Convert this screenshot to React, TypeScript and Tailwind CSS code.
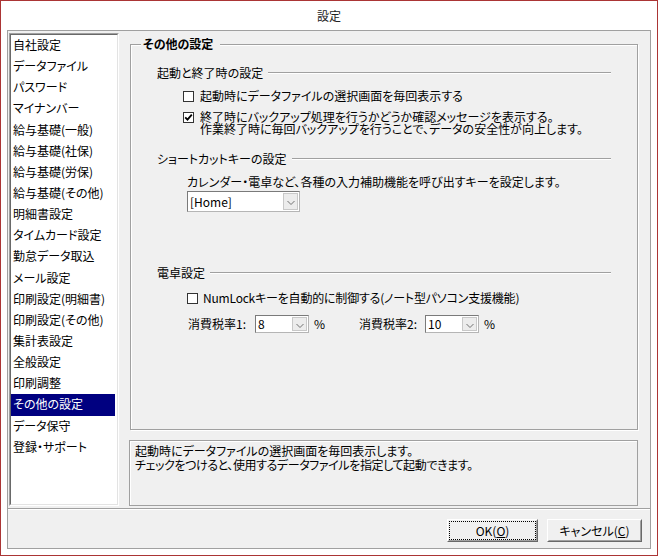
import React from "react";

const items = [
  "自社設定",
  "データファイル",
  "パスワード",
  "マイナンバー",
  "給与基礎(一般)",
  "給与基礎(社保)",
  "給与基礎(労保)",
  "給与基礎(その他)",
  "明細書設定",
  "タイムカード設定",
  "勤怠データ取込",
  "メール設定",
  "印刷設定(明細書)",
  "印刷設定(その他)",
  "集計表設定",
  "全般設定",
  "印刷調整",
  "その他の設定",
  "データ保守",
  "登録・サポート",
];

function CheckBox({ checked }: { checked?: boolean }) {
  return (
    <span className="w-[11px] h-[11px] shrink-0 border border-[#333333] bg-white flex items-center justify-center">
      {checked && (
        <svg width="9" height="9" viewBox="0 0 9 9">
          <path d="M1.2 4.3 L3.5 6.7 L7.8 1.6" stroke="#000" strokeWidth="1.8" fill="none" />
        </svg>
      )}
    </span>
  );
}

function Arrow() {
  return (
    <span className="w-[15px] h-full border border-[#c8c8c8] bg-[#ececec] flex items-center justify-center">
      <svg width="8" height="6" viewBox="0 0 8 6" className="mt-[3px]">
        <path d="M0.5 1 L4 4.5 L7.5 1" stroke="#707070" strokeWidth="1" fill="none" />
      </svg>
    </span>
  );
}

function Heading({ text, className }: { text: string; className: string }) {
  return (
    <div className={className}>
      <span>{text}</span>
      <div className="ml-[5px] flex-1 h-[2px] border-t border-t-[#a0a0a0] border-b border-b-white" />
    </div>
  );
}

export default function App() {
  return (
    <div className="w-[658px] h-[556px] border border-[#ab3535] bg-white flex flex-col font-['Noto_Sans_CJK_JP',sans-serif] [font-feature-settings:'palt'] text-[12px] leading-[14px] text-black select-none">
      <div className="h-[29px] shrink-0 flex items-center justify-center text-[#222222]">設定</div>
      <div className="mx-[6px] mb-[6px] flex-1 border border-[#a0a0a0] bg-[#f0f0f0] flex flex-col">
        <div className="h-[478px] shrink-0 flex border-b border-b-[#a0a0a0]">
          {/* list box */}
          <div className="ml-[1px] mt-[2px] mb-[2px] w-[110px] border border-t-[#a0a0a0] border-l-[#a0a0a0] border-r-white border-b-white">
            <div className="h-full border border-t-[#696969] border-l-[#696969] border-r-[#e3e3e3] border-b-[#e3e3e3] bg-white">
              {items.map((it, i) => (
                <div
                  key={it}
                  className={
                    i === 17
                      ? "h-[21.15px] mr-[2px] pl-[2px] pb-[1px] flex items-center bg-[#000080] text-white"
                      : "h-[21.15px] mr-[2px] pl-[2px] pb-[1px] flex items-center"
                  }
                >
                  {it}
                </div>
              ))}
            </div>
          </div>

          {/* right area */}
          <div className="flex-1 flex flex-col pt-[13px]">
            <div className="relative ml-[11px] mr-[12px] h-[386px] border border-[#a0a0a0] shadow-[inset_1px_1px_0_#ffffff,1px_1px_0_#ffffff]">
              <span className="absolute left-[10px] -top-[8px] bg-[#f0f0f0] pl-[2px] pr-[7px] font-bold">その他の設定</span>
              <div className="flex flex-col">
                <Heading text="起動と終了時の設定" className="mt-[18px] h-[20px] flex items-center pl-[26px] pr-[26px]" />
                <div className="mt-[3px] h-[20px] flex items-center pl-[52px] gap-[6px]">
                  <CheckBox />
                  <span>起動時にデータファイルの選択画面を毎回表示する</span>
                </div>
                <div className="mt-[5px] flex items-start pl-[52px] gap-[6px]">
                  <span className="mt-[1px]">
                    <CheckBox checked />
                  </span>
                  <div className="leading-[12px]">
                    <div>終了時にバックアップ処理を行うかどうか確認メッセージを表示する。</div>
                    <div>作業終了時に毎回バックアップを行うことで、データの安全性が向上します。</div>
                  </div>
                </div>
                <Heading text="ショートカットキーの設定" className="mt-[14px] h-[20px] flex items-center pl-[26px] pr-[26px]" />
                <div className="mt-[5px] h-[16px] flex items-center pl-[56px]">
                  カレンダー・電卓など、各種の入力補助機能を呼び出すキーを設定します。
                </div>
                <div className="mt-[1px] ml-[56px] w-[113px] h-[21px] flex border border-t-[#7a7a7a] border-l-[#7a7a7a] border-r-[#b5b5b5] border-b-[#b5b5b5] bg-white p-[1px]">
                  <span className="flex-1 pl-[1px] flex items-center">[Home]</span>
                  <Arrow />
                </div>
                <Heading text="電卓設定" className="mt-[51px] h-[20px] flex items-center pl-[26px] pr-[26px]" />
                <div className="mt-[5px] h-[20px] flex items-center pl-[56px] gap-[5px]">
                  <CheckBox />
                  <span className="tracking-[-0.2px]">NumLockキーを自動的に制御する(ノート型パソコン支援機能)</span>
                </div>
                <div className="mt-[6px] h-[20px] flex items-center pl-[57px]">
                  <div className="w-[171px] flex items-center">
                    <span className="w-[67px]">消費税率1:</span>
                    <div className="w-[54px] h-[18px] flex border border-t-[#7a7a7a] border-l-[#7a7a7a] border-r-[#b5b5b5] border-b-[#b5b5b5] bg-white p-[1px]">
                      <span className="flex-1 pl-[1px] flex items-center">8</span>
                      <Arrow />
                    </div>
                    <span className="ml-[5px]">%</span>
                  </div>
                  <div className="flex items-center">
                    <span className="w-[66px]">消費税率2:</span>
                    <div className="w-[54px] h-[18px] flex border border-t-[#7a7a7a] border-l-[#7a7a7a] border-r-[#b5b5b5] border-b-[#b5b5b5] bg-white p-[1px]">
                      <span className="flex-1 pl-[1px] flex items-center">10</span>
                      <Arrow />
                    </div>
                    <span className="ml-[5px]">%</span>
                  </div>
                </div>
              </div>
            </div>
            <div className="ml-[10px] mr-[12px] mt-[10px] h-[66px] border border-[#a0a0a0] shadow-[inset_1px_1px_0_#ffffff] pl-[5px] pt-[3px]">
              <div>起動時にデータファイルの選択画面を毎回表示します。</div>
              <div className="tracking-[-0.4px]">チェックをつけると、使用するデータファイルを指定して起動できます。</div>
            </div>
          </div>
        </div>

        {/* buttons */}
        <div className="flex-1 border-t border-t-white flex justify-end items-start pt-[9px] pr-[8px] gap-[9px]">
          <div className="w-[91px] h-[23px] border border-t-white border-l-white border-r-[#696969] border-b-[#696969] bg-[#f0f0f0]">
            <div className="h-full border border-t-[#f0f0f0] border-l-[#f0f0f0] border-r-[#a0a0a0] border-b-[#a0a0a0]">
              <div className="h-full border border-dotted border-black flex items-center justify-center">
                OK(<span className="underline">O</span>)
              </div>
            </div>
          </div>
          <div className="w-[95px] h-[23px] border border-t-white border-l-white border-r-[#696969] border-b-[#696969] bg-[#f0f0f0]">
            <div className="h-full border border-t-[#f0f0f0] border-l-[#f0f0f0] border-r-[#a0a0a0] border-b-[#a0a0a0] flex items-center justify-center">
              キャンセル(<span className="underline">C</span>)
            </div>
          </div>
        </div>
      </div>
    </div>
  );
}
